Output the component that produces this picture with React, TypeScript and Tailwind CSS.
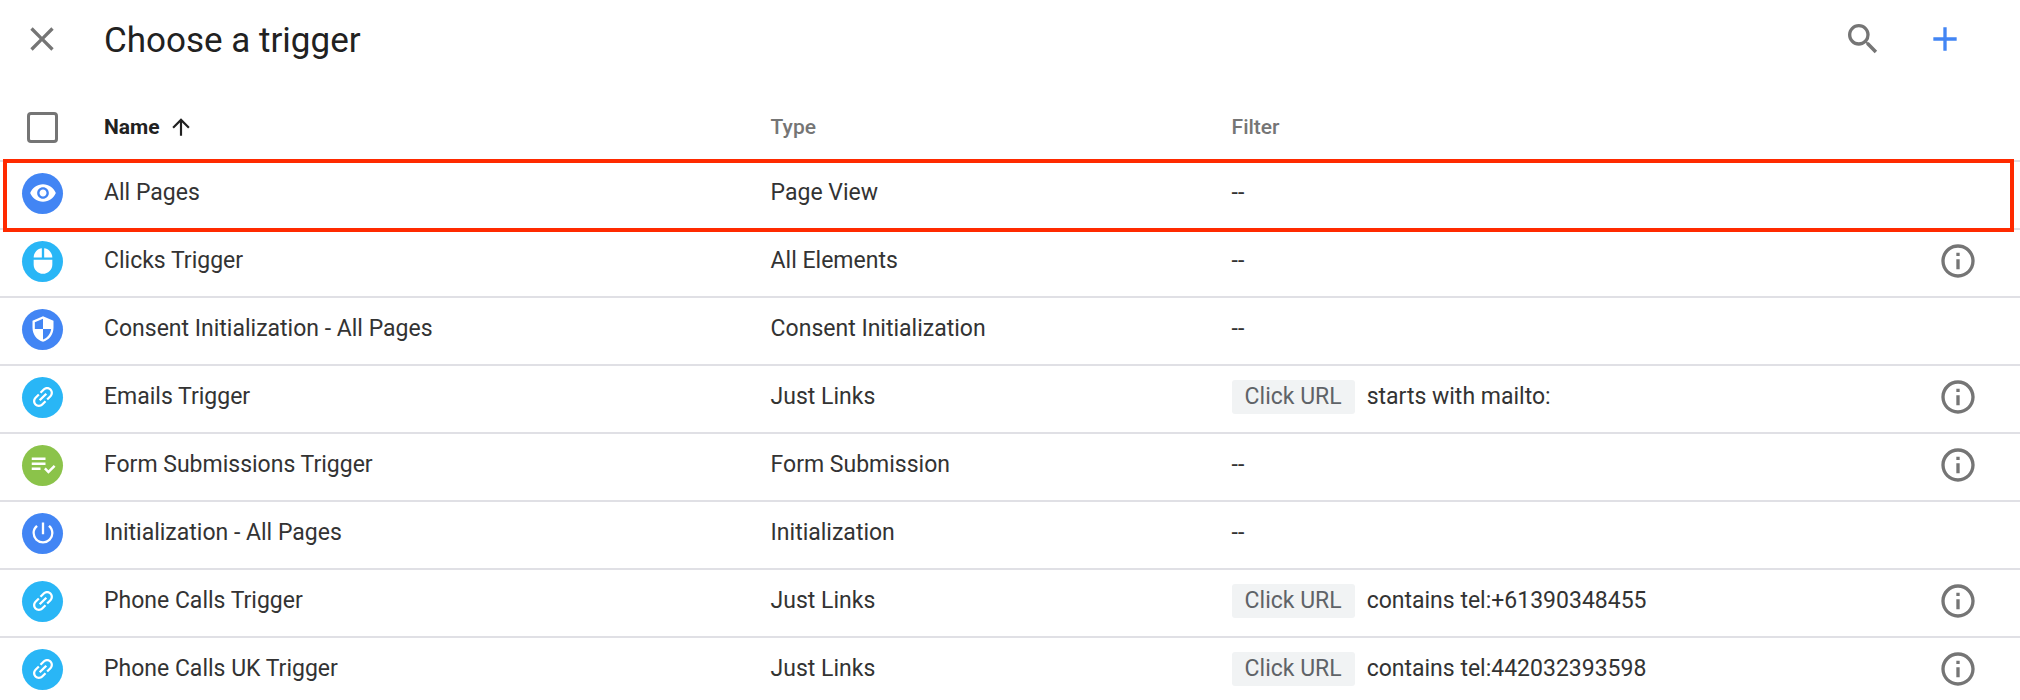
import {useState} from 'react'
import type {IconType} from 'react-icons'
import {
  MdAdd,
  MdArrowUpward,
  MdClose,
  MdInfoOutline,
  MdLink,
  MdMouse,
  MdPlaylistAddCheck,
  MdPowerSettingsNew,
  MdSearch,
  MdSecurity,
  MdVisibility,
} from 'react-icons/md'

interface Trigger {
  name: string
  type: string
  icon: IconType
  color: string
  iconClass?: string
  variable?: string
  condition?: string
  info?: boolean
  highlighted?: boolean
}

const triggers: Trigger[] = [
  {name: 'All Pages', type: 'Page View', icon: MdVisibility, color: 'bg-[#4285f4]', highlighted: true},
  {name: 'Clicks Trigger', type: 'All Elements', icon: MdMouse, color: 'bg-[#29b6f6]', info: true},
  {name: 'Consent Initialization - All Pages', type: 'Consent Initialization', icon: MdSecurity, color: 'bg-[#4285f4]'},
  {
    name: 'Emails Trigger',
    type: 'Just Links',
    icon: MdLink,
    iconClass: 'size-7 -rotate-45',
    color: 'bg-[#29b6f6]',
    variable: 'Click URL',
    condition: 'starts with mailto:',
    info: true,
  },
  {
    name: 'Form Submissions Trigger',
    type: 'Form Submission',
    icon: MdPlaylistAddCheck,
    iconClass: 'size-[30px]',
    color: 'bg-[#8bc34a]',
    info: true,
  },
  {name: 'Initialization - All Pages', type: 'Initialization', icon: MdPowerSettingsNew, color: 'bg-[#4285f4]'},
  {
    name: 'Phone Calls Trigger',
    type: 'Just Links',
    icon: MdLink,
    iconClass: 'size-7 -rotate-45',
    color: 'bg-[#29b6f6]',
    variable: 'Click URL',
    condition: 'contains tel:+61390348455',
    info: true,
  },
  {
    name: 'Phone Calls UK Trigger',
    type: 'Just Links',
    icon: MdLink,
    iconClass: 'size-7 -rotate-45',
    color: 'bg-[#29b6f6]',
    variable: 'Click URL',
    condition: 'contains tel:442032393598',
    info: true,
  },
]

export default function App() {
  const [allSelected, setAllSelected] = useState(false)

  return (
    <div className="flex h-screen flex-col overflow-hidden bg-white font-[Roboto,sans-serif] text-[23px] leading-7 text-[#333]">
      <header className="flex h-[94px] shrink-0 items-start pt-[19px] pr-[55px] pl-[22px]">
        <button aria-label="Close" className="mr-[42px] text-[#757575]">
          <MdClose className="size-10" />
        </button>
        <h1 className="flex-1 text-[35px] leading-11 text-[#212121]">Choose a trigger</h1>
        <div className="flex gap-[42px]">
          <button aria-label="Search" className="text-[#757575]">
            <MdSearch className="size-10" />
          </button>
          <button aria-label="New trigger" className="text-[#4285f4]">
            <MdAdd className="size-10" />
          </button>
        </div>
      </header>

      <div className="min-h-0 flex-1 overflow-hidden">
        <table className="w-full table-fixed border-collapse text-left">
          <colgroup>
            <col className="w-[104px]" />
            <col className="w-[33%]" />
            <col className="w-[461px]" />
            <col />
            <col className="w-[116px]" />
          </colgroup>
          <thead>
            <tr className="h-[67px] border-b-2 border-[#e0e0e5] text-[21px] text-[#757575]">
              <th className="pl-[27px]">
                <input
                  type="checkbox"
                  aria-label="Select all triggers"
                  checked={allSelected}
                  onChange={(e) => setAllSelected(e.target.checked)}
                  className="block size-[31px] appearance-none rounded-[4px] border-[3px] border-[#757575] checked:bg-[#757575]"
                />
              </th>
              <th aria-sort="ascending" className="font-bold text-[#212121]">
                <button className="flex items-center gap-2">
                  Name
                  <MdArrowUpward className="size-[26px]" />
                </button>
              </th>
              <th className="font-medium">Type</th>
              <th className="font-medium">Filter</th>
              <th aria-label="Details" />
            </tr>
          </thead>
          <tbody>
            {triggers.map((trigger) => (
              <TriggerRow key={trigger.name} trigger={trigger} />
            ))}
          </tbody>
        </table>
      </div>
    </div>
  )
}

function TriggerRow({trigger}: {trigger: Trigger}) {
  const Icon = trigger.icon

  return (
    <tr className="relative h-[68px] border-b-2 border-[#e0e0e5]">
      <td className="pb-1 pl-[22px]">
        {trigger.highlighted && (
          <div className="pointer-events-none absolute -top-[2px] right-[6px] -bottom-[5px] left-[3px] border-4 border-[#ff2a00]" />
        )}
        <span className={`flex size-[41px] items-center justify-center rounded-full text-white ${trigger.color}`}>
          <Icon className={trigger.iconClass ?? 'size-7'} />
        </span>
      </td>
      <td className="pb-1">{trigger.name}</td>
      <td className="pb-1">{trigger.type}</td>
      <td className="pb-1">
        {trigger.variable ? (
          <div className="flex items-center gap-3">
            <span className="rounded-[3px] bg-[#f1f3f4] px-[13px] py-[3px] text-[#5f6368]">{trigger.variable}</span>
            <span>{trigger.condition}</span>
          </div>
        ) : (
          '--'
        )}
      </td>
      <td className="pb-1 pl-[34px]">
        {trigger.info && (
          <button aria-label={`About ${trigger.name}`} className="block text-[#757575]">
            <MdInfoOutline className="size-10" />
          </button>
        )}
      </td>
    </tr>
  )
}
